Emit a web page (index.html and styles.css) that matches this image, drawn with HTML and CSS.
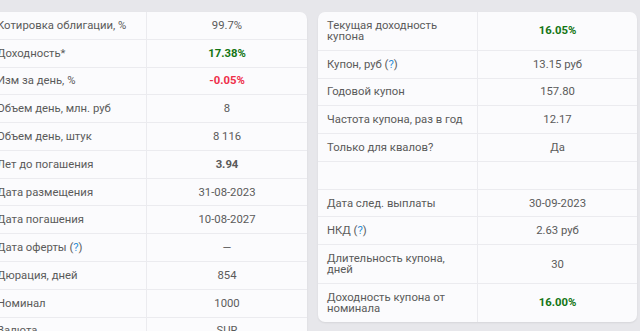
FILE: index.html
```html
<!DOCTYPE html>
<html lang="ru">
<head>
<meta charset="utf-8">
<link rel="stylesheet" href="styles.css">
</head>
<body>
<div class="wrap">
  <div class="card">
    <div class="row"><div class="lbl">Котировка облигации, %</div><div class="val">99.7%</div></div>
    <div class="row"><div class="lbl">Доходность*</div><div class="val green">17.38%</div></div>
    <div class="row"><div class="lbl">Изм за день, %</div><div class="val red">-0.05%</div></div>
    <div class="row"><div class="lbl">Объем день, млн. руб</div><div class="val">8</div></div>
    <div class="row"><div class="lbl">Объем день, штук</div><div class="val">8 116</div></div>
    <div class="row"><div class="lbl">Лет до погашения</div><div class="val bold">3.94</div></div>
    <div class="row"><div class="lbl">Дата размещения</div><div class="val">31-08-2023</div></div>
    <div class="row"><div class="lbl">Дата погашения</div><div class="val">10-08-2027</div></div>
    <div class="row"><div class="lbl">Дата оферты (<span class="q">?</span>)</div><div class="val">—</div></div>
    <div class="row"><div class="lbl">Дюрация, дней</div><div class="val">854</div></div>
    <div class="row"><div class="lbl">Номинал</div><div class="val">1000</div></div>
    <div class="row"><div class="lbl">Валюта</div><div class="val">SUR</div></div>
  </div>
  <div class="card card-right">
    <div class="row"><div class="lbl">Текущая доходность<br>купона</div><div class="val green">16.05%</div></div>
    <div class="row"><div class="lbl">Купон, руб (<span class="q">?</span>)</div><div class="val">13.15 руб</div></div>
    <div class="row"><div class="lbl">Годовой купон</div><div class="val">157.80</div></div>
    <div class="row"><div class="lbl">Частота купона, раз в год</div><div class="val">12.17</div></div>
    <div class="row"><div class="lbl">Только для квалов?</div><div class="val">Да</div></div>
    <div class="row"><div class="lbl">&nbsp;</div><div class="val"></div></div>
    <div class="row"><div class="lbl">Дата след. выплаты</div><div class="val">30-09-2023</div></div>
    <div class="row"><div class="lbl">НКД (<span class="q">?</span>)</div><div class="val">2.63 руб</div></div>
    <div class="row"><div class="lbl">Длительность купона,<br>дней</div><div class="val">30</div></div>
    <div class="row last"><div class="lbl">Доходность купона от<br>номинала</div><div class="val green">16.00%</div></div>
  </div>
</div>
</body>
</html>
```
FILE: styles.css
```css
html, body {
  margin: 0;
  padding: 0;
  background: #e7e7eb;
  overflow: hidden;
}
body {
  font-family: Roboto, "Noto Sans", sans-serif;
  font-size: 11.3px;
  color: #5a5a5a;
}
.wrap {
  display: flex;
  align-items: flex-start;
  gap: 11px;
  padding-top: 12px;
  margin-left: -12px;
}
.card {
  width: 319px;
  flex: none;
  background: #fbfbfd;
  border-radius: 7px;
  box-shadow: 0 1px 2px rgba(0,0,0,0.08);
  overflow: hidden;
}
.row {
  display: grid;
  grid-template-columns: 159px 160px;
  border-bottom: 1px solid #ebebef;
}
.card-right .row {
  grid-template-columns: 160px 159px;
}
.row.last {
  border-bottom: none;
}
.lbl {
  padding: 7.9px 8px 7.9px 9px;
  line-height: 11px;
  white-space: nowrap;
  border-right: 1px solid #ebebef;
}
.val {
  display: flex;
  align-items: center;
  justify-content: center;
  line-height: 11px;
  padding: 7.9px 4px;
}
.green {
  color: #137513;
  font-weight: bold;
}
.red {
  color: #ee2f4a;
  font-weight: bold;
}
.bold {
  font-weight: bold;
}
.q {
  color: #2f8fd6;
}
```
